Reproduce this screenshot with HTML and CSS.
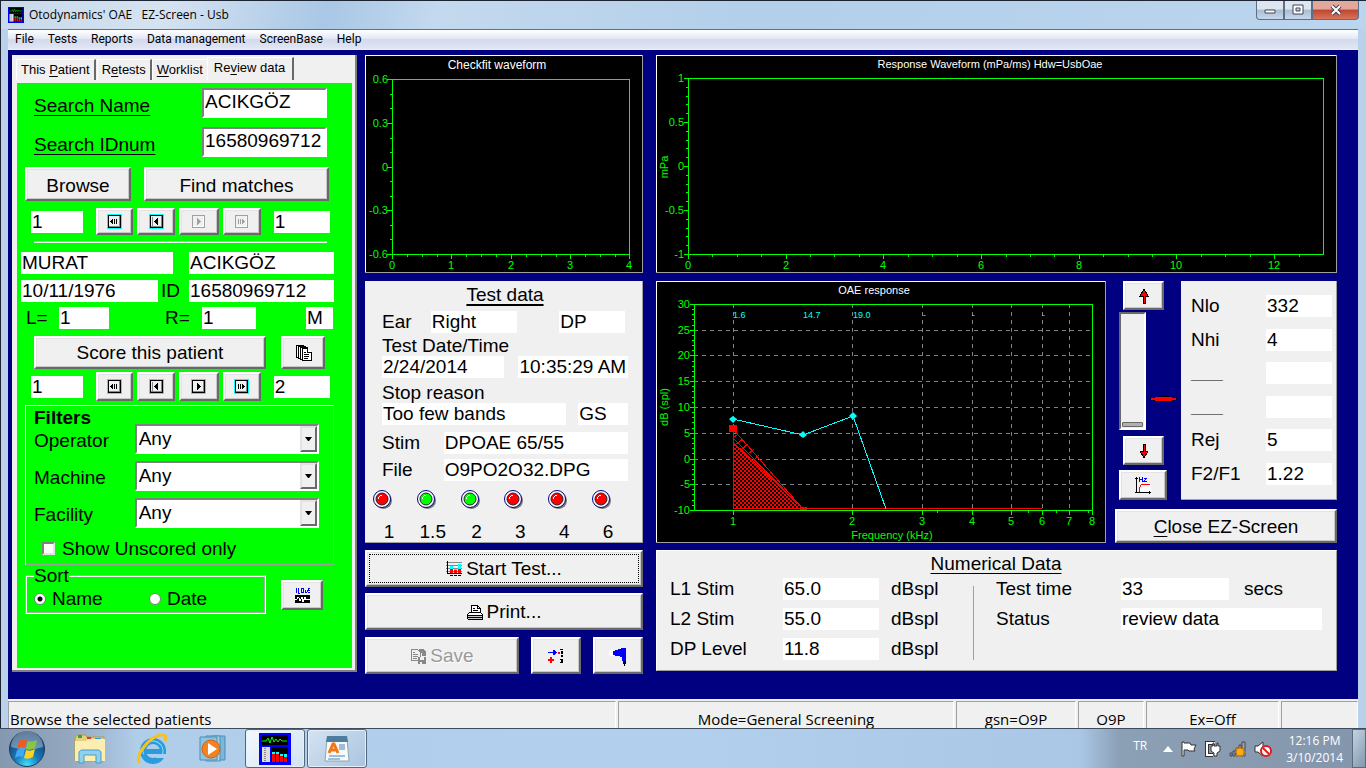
FILE: index.html
```html
<!DOCTYPE html>
<html lang="en">
<head>
<meta charset="utf-8">
<title>Otodynamics' OAE EZ-Screen - Usb</title>
<link rel="stylesheet" href="styles.css">
</head>
<body>
<svg class="defs" aria-hidden="true">
  <defs>
    <symbol id="i-first" viewBox="0 0 15 15"><path class="halo" d="M0 0h15v15H0z"/><path class="ink" d="M1 1h13v13H1z"/><path class="face" d="M2 2h10v10H2z"/><path class="shade" d="M12 2h1v11H2v-1h10z"/><path class="ink" d="M3 7h1V6h1V5h1v5H5V9H4V8H3zM7 5h1v5H7zM9 5h1v5H9z"/></symbol>
    <symbol id="i-prev" viewBox="0 0 15 15"><path class="halo" d="M0 0h15v15H0z"/><path class="ink" d="M1 1h13v13H1z"/><path class="face" d="M2 2h10v10H2z"/><path class="shade" d="M12 2h1v11H2v-1h10z"/><path class="shade" d="M3 3h1v9H3z"/><path class="ink" d="M5 7h1V6h1V5h1V4h1v7H8v-1H7V9H6V8H5z"/></symbol>
    <symbol id="i-next" viewBox="0 0 15 15"><path class="halo" d="M0 0h15v15H0z"/><path class="ink" d="M1 1h13v13H1z"/><path class="face" d="M2 2h10v10H2z"/><path class="shade" d="M12 2h1v11H2v-1h10z"/><path class="ink" d="M6 4h1v1h1v1h1v1h1v1H9v1H8v1H7v1H6z"/></symbol>
    <symbol id="i-last" viewBox="0 0 15 15"><path class="halo" d="M0 0h15v15H0z"/><path class="ink" d="M1 1h13v13H1z"/><path class="face" d="M2 2h10v10H2z"/><path class="shade" d="M12 2h1v11H2v-1h10z"/><path class="ink" d="M4 5h1v5H4zM6 5h1v5H6zM8 5h1v1h1v1h1v1h-1v1H9v1H8z"/></symbol>
    <symbol id="i-led" viewBox="0 0 19 19"><circle cx="10.500" cy="10.500" r="8.500" fill="#777"/><circle cx="9" cy="9" r="8.500" fill="#fff" stroke="#000080"/><circle cx="9" cy="9" r="6" fill="currentColor" stroke="#222"/><path d="M5 9V7h1V6h1V5h2v1H7v1H6v2z" fill="#fff"/></symbol>
    <symbol id="i-app" viewBox="0 0 32 32"><path fill="#00f" d="M0 0h32v32H0z"/><path d="M3 2h26v10H3zM12 14h17v15H12z"/><path fill="none" stroke="#0f0" d="M3 8h4l2-3 2 5 2-6 2 5 2-3 2 3 2-3 2 2h5"/><path fill="#ddd" d="M3 14h8v15H3z"/><path fill="none" stroke="#333" stroke-dasharray="1 1" d="M6 15v13"/><path fill="#f00" d="M13 21h3v8h-3zM17 21h3v8h-3zM21 23h3v6h-3zM25 24h3v5h-3z"/><path fill="#0ff" d="M13 19h3v2h-3zM17 19h3v2h-3zM21 21h3v2h-3zM25 21h3v3h-3z"/></symbol>
  </defs>
</svg>

<div class="window">
  <header class="titlebar">
    <svg class="app-icon" viewBox="0 0 32 32" aria-hidden="true"><use href="#i-app"/></svg>
    <h1 class="title">Otodynamics' OAE &nbsp; EZ-Screen - Usb</h1>
    <div class="window-buttons">
      <button class="wb" aria-label="Minimize"><svg width="14" height="12"><path fill="#fff" stroke="#445" d="M2 6h10v3H2z"/></svg></button>
      <button class="wb" aria-label="Maximize"><svg width="14" height="12"><path fill="#fff" stroke="#445" fill-rule="evenodd" d="M2 1h10v9H2zM5 4h4v3H5z"/></svg></button>
      <button class="wb wb-close" aria-label="Close"><svg width="14" height="12"><path stroke="#445" stroke-width="4" d="M3 2l8 8M11 2l-8 8"/><path stroke="#fff" stroke-width="2" d="M3 2l8 8M11 2l-8 8"/></svg></button>
    </div>
  </header>

  <div class="frame">
    <nav class="menubar" aria-label="Main menu">
      <button>File</button><button>Tests</button><button>Reports</button><button>Data management</button><button>ScreenBase</button><button>Help</button>
    </nav>

    <main class="client">
      <section class="patients">
        <div class="tabs" role="tablist">
          <button class="tab" role="tab">This <u>P</u>atient</button>
          <button class="tab" role="tab">R<u>e</u>tests</button>
          <button class="tab" role="tab"><u>W</u>orklist</button>
          <button class="tab tab-active" role="tab" aria-selected="true">Re<u>v</u>iew data</button>
        </div>
        <div class="review">
          <div class="search">
            <label class="underlined" for="sname">Search Name</label>
            <input class="sunken" id="sname" value="ACIKGÖZ">
            <label class="underlined" for="sid">Search IDnum</label>
            <input class="sunken" id="sid" value="16580969712">
          </div>
          <div class="search-actions">
            <button class="btn">Browse</button>
            <button class="btn">Find matches</button>
          </div>
          <div class="pager">
            <input class="field" aria-label="Current patient" value="1" readonly>
            <div class="pager-buttons">
              <button class="btn" aria-label="First"><svg><use href="#i-first"/></svg></button>
              <button class="btn" aria-label="Previous"><svg><use href="#i-prev"/></svg></button>
              <button class="btn" aria-label="Next" disabled><svg><use href="#i-next"/></svg></button>
              <button class="btn" aria-label="Last" disabled><svg><use href="#i-last"/></svg></button>
            </div>
            <input class="field" aria-label="Patient count" value="1" readonly>
          </div>
          <hr class="rule">
          <div class="names">
            <input class="field" aria-label="First name" value="MURAT" readonly>
            <input class="field" aria-label="Last name" value="ACIKGÖZ" readonly>
          </div>
          <div class="ident">
            <input class="field" aria-label="Date of birth" value="10/11/1976" readonly>
            <label for="pid">ID</label>
            <input class="field" id="pid" value="16580969712" readonly>
          </div>
          <div class="ears">
            <label for="left">L=</label><input class="field" id="left" value="1" readonly>
            <label for="right">R=</label><input class="field" id="right" value="1" readonly>
            <input class="field" aria-label="Sex" value="M" readonly>
          </div>
          <div class="score">
            <button class="btn">Score this patient</button>
            <button class="btn" aria-label="Copy records"><svg width="17" height="17" viewBox="0 0 17 17"><g fill="#fff" stroke="#000"><path d="M1 1h7v12H1z"/><path d="M3 2h7v12H3z"/><path d="M5 3h7v12H5z"/><path d="M7 4h5l4 4v8H7z"/><path d="M12 4v4h4M9 8h2M9 10h5M9 12h5M9 14h4"/></g></svg></button>
          </div>
          <div class="pager pager-tests">
            <input class="field" aria-label="Current test" value="1" readonly>
            <div class="pager-buttons">
              <button class="btn" aria-label="First test"><svg><use href="#i-first"/></svg></button>
              <button class="btn" aria-label="Previous test"><svg><use href="#i-prev"/></svg></button>
              <button class="btn" aria-label="Next test"><svg><use href="#i-next"/></svg></button>
              <button class="btn" aria-label="Last test"><svg><use href="#i-last"/></svg></button>
            </div>
            <input class="field" aria-label="Test count" value="2" readonly>
          </div>
          <section class="filters">
            <h2 class="filters-title">Filters</h2>
            <div class="filter-grid">
              <label for="op">Operator</label>
              <div class="combo"><select id="op"><option>Any</option></select><span class="combo-arrow"><svg width="7" height="4"><path d="M0 0h7L4 4H3z"/></svg></span></div>
              <label for="ma">Machine</label>
              <div class="combo"><select id="ma"><option>Any</option></select><span class="combo-arrow"><svg width="7" height="4"><path d="M0 0h7L4 4H3z"/></svg></span></div>
              <label for="fa">Facility</label>
              <div class="combo"><select id="fa"><option>Any</option></select><span class="combo-arrow"><svg width="7" height="4"><path d="M0 0h7L4 4H3z"/></svg></span></div>
            </div>
            <label class="check"><input type="checkbox">Show Unscored only</label>
          </section>
          <div class="sort-row">
            <fieldset class="sort">
              <legend>Sort</legend>
              <label><input type="radio" name="sort" checked>Name</label>
              <label><input type="radio" name="sort">Date</label>
            </fieldset>
            <button class="btn" aria-label="ILO v5 export"><svg width="15" height="15" viewBox="0 0 15 15"><path stroke="#00f" fill="none" d="M1 0v5M3 0v5h2M6.500 .5h2v4h-2zM10 2v2l1 1 1-1V2M15 .5h-2v2h2v2h-2"/><path d="M0 7h15v8H0z"/><path stroke="#fff" fill="none" d="M0 11h2l1-2 1 1 1 3 2-4 1 5 2-5 1 3 2-1h2"/></svg></button>
          </div>
        </div>
      </section>

      <section class="middle">
        <figure class="chart">
          <svg viewBox="365 55 278 218" role="img" aria-label="Checkfit waveform">
            <text class="c-title c-title-lg" x="497" y="69">Checkfit waveform</text>
            <g class="c-line">
              <path d="M392 79H629V254H392z"/>
              <path d="M387 79h5M387 123h5M387 167h5M387 210h5M387 254h5M390 94h2M390 108h2M390 138h2M390 152h2M390 181h2M390 196h2M390 225h2M390 239h2"/>
              <path d="M392 254v5M451 254v5M511 254v5M570 254v5M629 254v5M407 254v3M422 254v3M437 254v3M466 254v3M481 254v3M496 254v3M526 254v3M541 254v3M556 254v3M585 254v3M600 254v3M615 254v3"/>
            </g>
            <g class="c-y"><text x="388" y="83">0.6</text><text x="388" y="127">0.3</text><text x="388" y="171">0</text><text x="388" y="214">-0.3</text><text x="388" y="258">-0.6</text></g>
            <g class="c-x"><text x="392" y="269">0</text><text x="451" y="269">1</text><text x="511" y="269">2</text><text x="570" y="269">3</text><text x="629" y="269">4</text></g>
          </svg>
        </figure>

        <section class="testdata">
          <h2 class="panel-title">Test data</h2>
          <div class="td-ear"><label for="ear">Ear</label><input class="field" id="ear" value="Right" readonly><input class="field" aria-label="Test type" value="DP" readonly></div>
          <div class="td-label">Test Date/Time</div>
          <div class="td-date"><input class="field" aria-label="Test date" value="2/24/2014" readonly><input class="field" aria-label="Test time of day" value="10:35:29 AM" readonly></div>
          <div class="td-label td-stop">Stop reason</div>
          <div class="td-reason"><input class="field" aria-label="Stop reason" value="Too few bands" readonly><input class="field" aria-label="Mode" value="GS" readonly></div>
          <div class="td-pair"><label for="stim">Stim</label><input class="field" id="stim" value="DPOAE 65/55" readonly></div>
          <div class="td-pair td-file"><label for="file">File</label><input class="field" id="file" value="O9PO2O32.DPG" readonly></div>
          <div class="leds">
            <svg class="led led-red"><use href="#i-led"/></svg><svg class="led led-green"><use href="#i-led"/></svg><svg class="led led-green"><use href="#i-led"/></svg><svg class="led led-red"><use href="#i-led"/></svg><svg class="led led-red"><use href="#i-led"/></svg><svg class="led led-red"><use href="#i-led"/></svg>
          </div>
          <div class="bands"><span>1</span><span>1.5</span><span>2</span><span>3</span><span>4</span><span>6</span></div>
        </section>

        <div class="actions">
          <button class="btn btn-default"><svg width="16" height="16" viewBox="0 0 16 16"><path stroke="#888" d="M0 1h16M0 4h16M0 7h16M0 10h16"/><path d="M1 0h1v12h14v1H1zM4 14h3v1H4zM8 14h3v1H8zM12 14h3v1h-3z"/><path fill="#f00" d="M4 7h3v5H4zM8 9h3v3H8zM12 7h3v5h-3z"/><path fill="#0ff" d="M4 5h3v3H4zM8 8h3v1H8zM12 3h3v5h-3z"/></svg>Start Test...</button>
          <button class="btn"><svg width="16" height="16" viewBox="0 0 16 16"><path fill="#fff" stroke="#000" d="M4 9V1h6l3 3v5"/><path fill="none" stroke="#000" d="M6 4h2M6 6h5M10 1v3h3"/><path d="M2 8h12l2 3v4l-1 1H1l-1-1v-4z"/><path fill="#fff" d="M2 9h12l1 2H1z"/><path fill="#ccc" d="M1 12h14v1H1zM1 14h14v1H1z"/></svg>Print...</button>
          <div class="action-row">
            <button class="btn" disabled><svg width="16" height="16" viewBox="0 0 16 16"><path fill="none" stroke="#888" d="M1 1h6l3 3v8H1zM3 4h2M3 6h5M3 8h5M3 10h4"/><path fill="#888" d="M9 1h5l2 3v4h-4V5l-3-2zM8 9h8v7H8z"/><path fill="#f0f0f0" d="M10 9h4v3h-4zM10 14h2v2h-2z"/></svg>Save</button>
            <button class="btn" aria-label="Step marker"><svg width="16" height="16" viewBox="0 0 16 16"><path fill="#00f" d="M0 4h5V2h1l3 3-3 2H5V5H0z"/><path fill="#f00" d="M2 9h2v2h2v2H4v2H2v-2H0v-2h2zM10 4h2v2h-2z"/><path d="M12 1h3v1h-3zM13 3h2v3h-2zM13 7h2v2h-2zM12 11h3v1h-3zM13 12h2v2h-2zM12 14h3v1h-3z"/></svg></button>
            <button class="btn" aria-label="Probe"><svg width="20" height="20" viewBox="0 0 20 20"><path fill="#fff" d="M2 4h4v6H2L1 8V6z"/><path fill="#00f" d="M5 5l9-3h4v13h-4v-4L5 9z"/><path d="M15 15h3v3h-1v3h-1v-3h-1z"/></svg></button>
          </div>
        </div>
      </section>

      <section class="right">
        <figure class="chart">
          <svg viewBox="656 55 681 218" role="img" aria-label="Response waveform">
            <text class="c-title" x="990" y="68">Response Waveform (mPa/ms) Hdw=UsbOae</text>
            <g class="c-line">
              <path d="M688 78H1323V254H688z"/>
              <path d="M684 78h4M684 122h4M684 166h4M684 210h4M684 254h4M686 87h2M686 96h2M686 104h2M686 113h2M686 131h2M686 140h2M686 148h2M686 157h2M686 175h2M686 184h2M686 192h2M686 201h2M686 219h2M686 228h2M686 236h2M686 245h2"/>
              <path d="M688 254v5M786 254v5M883 254v5M981 254v5M1079 254v5M1176 254v5M1274 254v5M712 254v3M737 254v3M761 254v3M810 254v3M834 254v3M859 254v3M908 254v3M932 254v3M957 254v3M1006 254v3M1030 254v3M1054 254v3M1103 254v3M1128 254v3M1152 254v3M1201 254v3M1225 254v3M1250 254v3M1299 254v3"/>
            </g>
            <g class="c-y"><text x="684" y="82">1</text><text x="684" y="126">0.5</text><text x="684" y="170">0</text><text x="684" y="214">-0.5</text><text x="684" y="258">-1</text></g>
            <g class="c-x"><text x="688" y="269">0</text><text x="786" y="269">2</text><text x="883" y="269">4</text><text x="981" y="269">6</text><text x="1079" y="269">8</text><text x="1176" y="269">10</text><text x="1274" y="269">12</text><text transform="translate(668 167) rotate(-90)">mPa</text></g>
          </svg>
        </figure>

        <div class="response">
          <figure class="chart">
            <svg viewBox="656 281 450 262" role="img" aria-label="OAE response">
              <defs><pattern id="hatch" width="4" height="4" patternUnits="userSpaceOnUse"><path fill="#f00" d="M0 0h4v4H0z"/><path d="M0 0h2v2H0zM2 2h2v2H2z"/></pattern></defs>
              <text class="c-title" x="874" y="294">OAE response</text>
              <path class="c-grid" d="M694 330H1092M694 355H1092M694 381H1092M694 407H1092M694 433H1092M694 459H1092M694 484H1092M733 304V510M852 304V510M922 304V510M972 304V510M1011 304V510M1042 304V510M1069 304V510"/>
              <g class="c-line">
                <path d="M694 304H1092V510H694z"/>
                <path d="M690 304h4M690 330h4M690 355h4M690 381h4M690 407h4M690 433h4M690 459h4M690 484h4M690 510h4"/>
                <path d="M692 309h2M692 314h2M692 319h2M692 325h2M692 335h2M692 340h2M692 345h2M692 350h2M692 361h2M692 366h2M692 371h2M692 376h2M692 386h2M692 391h2M692 397h2M692 402h2M692 412h2M692 417h2M692 422h2M692 428h2M692 438h2M692 443h2M692 448h2M692 453h2M692 464h2M692 469h2M692 474h2M692 479h2M692 489h2M692 494h2M692 500h2M692 505h2"/>
                <path d="M733 510v5M852 510v5M922 510v5M972 510v5M1011 510v5M1042 510v5M1069 510v5M1092 510v5M937 510v3M1028 510v3M1056 510v3M1088 510v3"/>
              </g>
              <path fill="url(#hatch)" d="M733 442L803 509H733z"/>
              <path class="c-noise" d="M733 429V509M733 429L803 509M733 438L803 509M733 442L803 509M733 438l5-4M736 444l7-5M742 449l6-5M748 454l6-5M754 460l5-5"/>
              <path fill="#f00" d="M729 425h8v7h-8zM800 507h7v3h-7zM733 508h309v1H733z"/>
              <path class="c-signal" d="M733 419L803 435L853 416L886 509"/>
              <path fill="#0ff" d="M733 416l4 3-4 4-4-4zM803 431l4 4-4 3-4-3zM853 412l4 4-4 4-4-4z"/>
              <g class="c-values"><text x="733" y="318">1.6</text><text x="803" y="318">14.7</text><text x="853" y="318">19.0</text><text x="923" y="318">-</text><text x="972" y="318">-</text><text x="1042" y="318">-</text></g>
              <g class="c-y"><text x="690" y="308">30</text><text x="690" y="334">25</text><text x="690" y="359">20</text><text x="690" y="385">15</text><text x="690" y="411">10</text><text x="690" y="437">5</text><text x="690" y="463">0</text><text x="690" y="488">-5</text><text x="690" y="514">-10</text></g>
              <g class="c-x"><text x="733" y="525">1</text><text x="852" y="525">2</text><text x="922" y="525">3</text><text x="972" y="525">4</text><text x="1011" y="525">5</text><text x="1042" y="525">6</text><text x="1069" y="525">7</text><text x="1092" y="525">8</text><text x="892" y="539">Frequency (kHz)</text><text transform="translate(668 407) rotate(-90)">dB (spl)</text></g>
            </svg>
          </figure>
          <div class="side">
            <div class="side-top">
              <div class="scale">
                <button class="btn scale-step" aria-label="Scale up"><svg width="10" height="16" viewBox="0 0 10 16"><path stroke="#000" fill="#f00" d="M5 1l4 7H6v7H4V8H1z"/></svg></button>
                <div class="scale-slide">
                  <div class="slot"><div class="thumb"></div></div>
                  <svg class="lamp" viewBox="0 0 27 8"><path d="M0 3h4V2h5V1h10v1h5v1h3v2h-3v1h-5v1H9V6H4V5H0z"/><path fill="#f00" d="M1 3h4V2h17v1h4v2h-4v1H5V5H1z"/></svg>
                </div>
                <button class="btn scale-step" aria-label="Scale down"><svg width="10" height="16" viewBox="0 0 10 16"><path stroke="#000" fill="#f00" d="M5 15L1 8h3V1h2v7h3z"/></svg></button>
                <button class="btn scale-hz" aria-label="Frequency axis"><svg width="17" height="18" viewBox="0 0 17 18"><path fill="#fff" d="M6 8h10v8H4z"/><path d="M1 1h1v15h14v1H0v-1h1zM0 2h3v1H0zM14 15h1v3h-1z"/><path fill="none" stroke="#f00" d="M4 16v-3l2-4 3-1h6"/><path fill="none" stroke="#00f" d="M4 1v5M7 1v5M4 3h3M9 2h3l-3 3h3"/></svg></button>
              </div>
              <div class="params">
                <label for="nlo">Nlo</label><input class="field" id="nlo" value="332" readonly>
                <label for="nhi">Nhi</label><input class="field" id="nhi" value="4" readonly>
                <label class="blank" for="p3">___</label><input class="field" id="p3" value="" readonly>
                <label class="blank" for="p4">___</label><input class="field" id="p4" value="" readonly>
                <label for="rej">Rej</label><input class="field" id="rej" value="5" readonly>
                <label for="f21">F2/F1</label><input class="field" id="f21" value="1.22" readonly>
              </div>
            </div>
            <button class="btn close-app"><span><u>C</u>lose EZ-Screen</span></button>
          </div>
        </div>

        <section class="numerical">
          <h2 class="panel-title">Numerical Data</h2>
          <div class="num-cols">
            <div class="num-left">
              <label for="l1">L1 Stim</label><input class="field" id="l1" value="65.0" readonly><span>dBspl</span>
              <label for="l2">L2 Stim</label><input class="field" id="l2" value="55.0" readonly><span>dBspl</span>
              <label for="dpl">DP Level</label><input class="field" id="dpl" value="11.8" readonly><span>dBspl</span>
            </div>
            <div class="num-right">
              <label for="tt">Test time</label><input class="field" id="tt" value="33" readonly><span>secs</span>
              <label for="st">Status</label><input class="field num-status" id="st" value="review data" readonly>
            </div>
          </div>
        </section>
      </section>
    </main>

    <footer class="statusbar">
      <div class="cell cell-left">Browse the selected patients</div>
      <div class="cell">Mode=General Screening</div>
      <div class="cell">gsn=O9P</div>
      <div class="cell">O9P</div>
      <div class="cell">Ex=Off</div>
      <div class="cell"></div>
    </footer>
  </div>
</div>

<footer class="taskbar">
  <button class="start" aria-label="Start"><svg width="38" height="38" viewBox="0 0 38 38">
    <defs><radialGradient id="orb" cx=".5" cy=".95" r=".9"><stop offset="0" stop-color="#3fe0ff"/><stop offset=".4" stop-color="#1a78b8"/><stop offset="1" stop-color="#123a66"/></radialGradient></defs>
    <circle cx="19" cy="19" r="17.500" fill="url(#orb)" stroke="#1c3c5c"/><path fill="#fff" opacity=".35" d="M3 17a16 16 0 0 1 32 0q-16 5-32 0z"/>
    <path fill="#ee5a24" d="M11 11q4-3 8-1l-2 8q-4-2-8 1z"/><path fill="#8cc63f" d="M20 11q4 2 9-1l-2 8q-5 3-9 1z"/><path fill="#3fa9f5" d="M9 20q4-3 8-1l-2 8q-4-2-8 1z"/><path fill="#ffd21f" d="M18 20q4 2 9-1l-2 8q-5 3-9 1z"/></svg></button>
  <button class="task" aria-label="Explorer"><svg width="32" height="32" viewBox="0 0 32 32"><path fill="#e6cf7c" stroke="#b89a3c" d="M1 5l2-3h8l2 2h17v24H1z"/><path fill="#35a335" d="M4 2h4v3H4z"/><path fill="#d33" d="M13 4h4v2h-4z"/><path fill="#39c" d="M21 5h6v2h-6z"/><path fill="#fbeeb0" d="M1 8h11l2-2h17v22H1z"/><path fill="#8fd0ee" stroke="#4a9cc8" d="M5 30V19q1-2 3-2h16q2 0 3 2v11h-5v-8H10v8z"/></svg></button>
  <button class="task" aria-label="Internet Explorer"><svg width="32" height="32" viewBox="0 0 32 32"><circle cx="17" cy="18" r="10" fill="none" stroke="#2a9bdc" stroke-width="6"/><path fill="#b0cdea" d="M18 20h12v5H20z"/><path fill="#2a9bdc" d="M10 16h20v5H10z"/><circle cx="17" cy="18" r="10" fill="none" stroke="#8fdcff" stroke-width="1" stroke-dasharray="40 30" transform="rotate(160 17 18)"/><path fill="none" stroke="#f6c21c" stroke-width="3" d="M4 30C-3 25 12 5 24 2q8-1 5 6"/></svg></button>
  <button class="task" aria-label="Media Player"><svg width="32" height="32" viewBox="0 0 32 32"><path fill="#7db6d8" stroke="#4a8fb8" d="M14 3h13v24H14z"/><path fill="#a6d3ea" stroke="#4a8fb8" d="M8 3h14v25H8z"/><path fill="#8cc4e2" stroke="#4a8fb8" d="M2 4h17v23H2z"/><circle cx="13" cy="16" r="9" fill="#f58220" stroke="#d95f0a"/><path fill="#fff" d="M10 10l9 6-9 6z"/></svg></button>
  <button class="task task-open task-active" aria-label="EZ-Screen"><svg width="32" height="32"><use href="#i-app"/></svg></button>
  <button class="task task-open" aria-label="WordPad"><svg width="32" height="32" viewBox="0 0 32 32"><path fill="#f7fafc" stroke="#8aa" d="M6 6h20l2 22H4z"/><path fill="#4f7da0" d="M6 3h20l1 6H5z"/><path fill="none" stroke="#f07818" stroke-width="3" d="M8 20l4-9h1l4 9M10 17h5"/><path stroke="#4a7fb5" d="M18 12h6M18 14h6M18 16h6M8 23h16M7 26h12"/></svg></button>
  <div class="tray">
    <span class="lang">TR</span>
    <svg width="10" height="6"><path fill="#fff" d="M5 0l5 6H0z"/></svg>
    <svg width="16" height="16"><path fill="#fff" stroke="#333" d="M1 1h2v1h6l1 2h5l-2 4 1 2H8L7 9H3v6H1z"/></svg>
    <svg width="16" height="16"><path fill="none" stroke="#333" stroke-width="4" d="M10 2H2v12h6"/><path fill="none" stroke="#fff" stroke-width="2" d="M10 2H2v12h6"/><path fill="#fff" stroke="#333" d="M6 5h2V2h1v3h3V2h1v3h2v5l-3 2v3H9v-3L6 10z"/></svg>
    <svg width="17" height="16"><path fill="#9ab" stroke="#445" d="M1 12h2v3H1zM4 10h2v5H4zM7 7h2v8H7zM10 4h2v11h-2zM13 1h3v14h-3z"/><path fill="#ffb01c" stroke="#c77a00" d="M11 5l1 3 3-1-1 3 3 1-3 1 1 3-3-1-1 2-1-2-3 1 1-3-2-1 2-1-1-3 3 1z"/></svg>
    <svg width="18" height="16"><path fill="#fff" stroke="#333" d="M1 5h3l5-4v14l-5-4H1z"/><circle cx="12" cy="10" r="5" fill="#fff" stroke="#e21b1b" stroke-width="2"/><path stroke="#e21b1b" stroke-width="2" d="M9 7l6 6"/></svg>
    <time class="clock">12:16 PM<br>3/10/2014</time>
  </div>
  <button class="show-desktop" aria-label="Show desktop"></button>
</footer>
</body>
</html>
```
FILE: styles.css
```css
* { box-sizing: border-box; }
body {
  margin: 0;
  min-height: 100vh;
  display: flex;
  flex-direction: column;
  font: 19px/22px "Liberation Sans", Arial, sans-serif;
  color: #000;
  background: #b5cfe9;
}
button, input, select { font: inherit; color: inherit; margin: 0; }
input, select { min-width: 0; border-radius: 0; }
svg { display: block; flex: none; }
h1, h2, figure, fieldset { margin: 0; padding: 0; font-size: inherit; font-weight: normal; }
.defs { position: absolute; width: 0; height: 0; }

/* Window chrome */
.window { flex: 1; display: flex; flex-direction: column; border-left: 1px solid #1b2430; background: #b9d1ea; }
.titlebar {
  height: 29px;
  display: flex;
  align-items: center;
  padding-left: 7px;
  border-top: 1px solid #1b2430;
  background: linear-gradient(100deg, #c8d9ea 0%, #d5e3f1 12%, #a9c7e6 24%, #c3d9ee 32%, #b3cfea 55%, #bcd5ee 100%);
}
.app-icon { width: 16px; height: 16px; }
.title { margin-left: 5px; font: 12px/16px "Open Sans", "Noto Sans", sans-serif; white-space: pre; }
.window-buttons { margin-left: auto; margin-right: 7px; align-self: flex-start; display: flex; }
.wb {
  display: flex; align-items: center; justify-content: center;
  width: 28px; height: 19px; padding: 0;
  border: 1px solid #5b6f85; border-top: 0;
  background: linear-gradient(#dbe6f1 45%, #a9bdd2 50%, #c6d8ea);
}
.wb:first-child { border-radius: 0 0 0 4px; }
.wb-close { width: 47px; border-radius: 0 0 4px 0; background: linear-gradient(#e3a79b 45%, #c0452f 50%, #d8745c); }
.frame { flex: 1; display: flex; flex-direction: column; margin: 0 8px 0 7px; }
.menubar { height: 21px; display: flex; gap: 14px; padding-left: 7px; border-top: 1px solid #5f7285; border-bottom: 1px solid #f0f0f0; background: linear-gradient(#fff, #e3e8f4 45%, #d3daed 50%, #e1e6f4); }
.menubar button { padding: 0; border: 0; background: none; font: 12px/19px Roboto, "Open Sans", sans-serif; }

/* Shared controls */
.btn {
  display: flex; align-items: center; justify-content: center; gap: 4px;
  padding: 0; background: #f0f0f0; white-space: nowrap;
  border: 2px solid; border-color: #fff #696969 #696969 #fff;
  box-shadow: inset -1px -1px #c8c8c8, inset 1px 1px #e3e3e3;
}
.btn:disabled { color: #9a9a9a; text-shadow: 1px 1px #fff; }
.field { display: block; width: 100%; height: 22px; padding: 0 1px; border: 0; background: #fff; outline: 0; }
.sunken { width: 100%; height: 30px; padding: 0 1px 2px; background: #fff; border: 2px solid; border-color: #808080 #fff #fff #808080; outline: 0; }
.underlined, .panel-title { text-decoration: underline; text-decoration-thickness: 1px; text-underline-offset: 3px; }
.panel-title { text-align: center; text-decoration-thickness: 2px; }

.client {
  flex: 1;
  display: grid;
  grid-template-columns: 345fr 278fr 686fr;
  gap: 8px;
  align-items: start;
  padding: 5px 21px 24px 4px;
  background: #000080;
}

/* Patient panel */
.patients { min-width: 0; padding: 2px 3px 2px 5px; background: #f0f0f0; border-right: 2px solid #808080; border-bottom: 2px solid #808080; }
.tabs { height: 26px; display: flex; align-items: flex-start; margin-left: -1px; font-size: 13px; line-height: 20px; }
.tab { height: 21px; margin-top: 2px; padding: 0 4px; border: 0; border-left: 1px solid #fff; border-top: 1px solid #fff; border-right: 2px solid #696969; background: #f0f0f0; white-space: nowrap; }
.tab:nth-child(2) { margin-left: 1px; }
.tab:nth-child(3) { border-right: 0; }
.tab-active { height: 23px; margin-top: 0; padding: 0 7px 2px 6px; }
.tab u { text-underline-offset: 2px; }
.review { min-height: 585px; padding: 5px 18px 0 8px; background: #0f0; }
.search { display: grid; grid-template-columns: 168fr 125fr; row-gap: 9px; align-items: center; padding: 0 7px 0 9px; }
.search label { padding-top: 6px; }
.search-actions { display: grid; grid-template-columns: 106fr 185fr; gap: 13px; margin: 10px 5px 0 0; }
.search-actions .btn { height: 34px; padding-top: 3px; }
.pager { display: grid; grid-template-columns: 52fr 164fr 56fr; column-gap: 13px; align-items: center; margin: 7px 4px 0 6px; }
.pager-buttons { display: grid; grid-template-columns: 37fr 38fr 40fr 38fr; gap: 4px; }
.pager-buttons .btn { height: 27px; }
.pager svg { width: 15px; height: 15px; shape-rendering: crispEdges; }
.halo { fill: var(--halo, #0ff); }
.ink { fill: var(--ink, #000); }
.face { fill: #f0f0f0; }
.shade { fill: var(--shade, #888); }
.btn:disabled svg { --halo: #f0f0f0; --ink: #a0a0a0; --shade: #fff; }
.rule { height: 2px; margin: 6px 7px 0 9px; border: 0; background: #fff; border-top: 1px solid #a0d0a0; }
.names { display: grid; grid-template-columns: 152fr 145fr; gap: 16px; margin: 9px 0 0 -4px; }
.ident { display: grid; grid-template-columns: 137fr 31fr 145fr; margin: 6px 0 0 -4px; }
.ident label { padding-left: 3px; }
.ears { display: grid; grid-template-columns: 33fr 50fr 56fr 37fr 54fr 50fr 27fr; margin: 5px 1px 0 1px; }
.ears label:nth-of-type(2) { grid-column: 4; }
.ears #right { grid-column: 5; }
.ears .field:last-child { grid-column: 7; }
.score { display: grid; grid-template-columns: 232fr 44fr; gap: 15px; margin: 7px 9px 0 9px; }
.score .btn { height: 33px; }
.pager-tests { margin-top: 3px; }
.pager-tests .btn { height: 29px; }
.filters { margin-top: 4px; padding: 0 14px 4px 8px; border: 1px solid; border-color: #fff #a0a0a0 #a0a0a0 #fff; }
.filters-title { height: 18px; font-weight: bold; line-height: 24px; }
.filter-grid { display: grid; grid-template-columns: 101fr 185fr; row-gap: 7px; align-items: center; }
.filter-grid label { padding-top: 3px; }
.combo { position: relative; height: 30px; }
.combo select { width: 100%; height: 100%; padding: 0 22px 0 2px; appearance: none; background: #fff; border: 2px solid; border-color: #808080 #fff #fff #808080; }
.combo-arrow { position: absolute; top: 2px; right: 2px; bottom: 2px; width: 17px; display: flex; align-items: center; justify-content: center; background: #f0f0f0; border: 2px solid; border-color: #e3e3e3 #696969 #696969 #e3e3e3; pointer-events: none; }
.check { display: flex; align-items: center; gap: 7px; padding: 9px 0 0 8px; line-height: 23px; }
.check input { width: 13px; height: 13px; appearance: none; background: #fff; border: 2px solid; border-color: #808080 #e3e3e3 #e3e3e3 #808080; }
.sort-row { display: grid; grid-template-columns: 241fr 42fr; gap: 15px; align-items: end; margin: 1px 11px 0 0; }
.sort { min-width: 0; height: 48px; display: grid; grid-template-columns: 115fr 115fr; padding: 0 0 0 7px; border: 2px groove #fff; }
.sort legend { padding: 0; line-height: 20px; }
.sort label { display: flex; align-items: center; gap: 6px; line-height: 20px; }
.sort input { width: 12px; height: 12px; appearance: none; border-radius: 50%; background: #fff; border: 1px solid #808080; }
.sort input:checked { background: radial-gradient(#000 2px, #fff 3px); }
.sort-row .btn { height: 30px; margin-bottom: 4px; }

/* Charts */
.chart { background: #000; box-shadow: inset -1px -1px #a0a0a0, inset 1px 1px #fff; }
.chart svg { width: 100%; height: auto; font-size: 11px; }
.c-title { fill: #fff; text-anchor: middle; }
.c-title-lg { font-size: 12px; }
.c-line { fill: none; stroke: #0f0; shape-rendering: crispEdges; }
.c-y, .c-x { fill: #0f0; text-anchor: end; }
.c-x { text-anchor: middle; }
.c-grid { stroke: #808080; stroke-dasharray: 4 4; shape-rendering: crispEdges; }
.c-noise { fill: none; stroke: #f00; shape-rendering: crispEdges; }
.c-signal { fill: none; stroke: #0ff; shape-rendering: crispEdges; }
.c-values { fill: #0ff; font-size: 9px; }

/* Test data */
.middle, .right { min-width: 0; display: flex; flex-direction: column; gap: 8px; }
.right { padding-left: 5px; }
.testdata { height: 262px; padding: 3px 14px 0 17px; background: #f0f0f0; border-right: 1px solid #a0a0a0; border-bottom: 1px solid #a0a0a0; }
.td-ear { display: grid; grid-template-columns: 49fr 87fr 42fr 66fr; margin: 5px 3px 0 0; }
.td-ear .field:last-child { grid-column: 4; }
.td-label { margin-top: 3px; line-height: 20px; }
.td-date { display: grid; grid-template-columns: 123fr 110fr; gap: 14px; }
.td-stop { margin-top: 5px; }
.td-reason { display: grid; grid-template-columns: 185fr 50fr; gap: 12px; }
.td-pair { display: grid; grid-template-columns: 62fr 185fr; margin-top: 7px; }
.td-file { margin-top: 5px; }
.leds { display: flex; justify-content: space-between; margin: 9px 17px 0 -9px; }
.led { width: 19px; height: 19px; }
.led-red { color: #f00; }
.led-green { color: #0f0; }
.bands { display: grid; grid-template-columns: repeat(6, 1fr); margin: 12px -2px 0 -15px; text-align: center; }

.actions { display: flex; flex-direction: column; gap: 6px; margin-top: -1px; }
.actions .btn { width: 100%; height: 37px; }
.actions svg, .score svg, .sort-row svg, .scale svg { shape-rendering: crispEdges; }
.btn-default { outline: 1px dotted #000; outline-offset: -5px; }
.action-row { display: grid; grid-template-columns: 154fr 50fr 50fr; gap: 12px; margin-top: 1px; }

/* Response row */
.response { display: grid; grid-template-columns: 450fr 222fr; gap: 9px; }
.side { min-width: 0; display: flex; flex-direction: column; justify-content: space-between; }
.side-top { display: grid; grid-template-columns: 60fr 156fr; gap: 6px; }
.scale { display: flex; flex-direction: column; padding-left: 4px; }
.scale-step { width: 41px; height: 29px; margin-left: 4px; }
.scale-slide { display: flex; align-items: flex-end; gap: 4px; margin: 2px -2px 6px 0; }
.slot { width: 27px; height: 118px; display: flex; align-items: flex-end; background: #f0f0f0; border: 2px solid; border-color: #696969 #fff #fff #696969; padding: 1px; }
.thumb { width: 100%; height: 5px; border: 1px solid #696969; background: #b0b0b0; border-radius: 1px; }
.lamp { width: 27px; height: 8px; margin-bottom: 27px; }
.scale-hz { width: 48px; height: 30px; margin-top: 5px; }
.params { display: grid; grid-template-columns: 75fr 66fr; align-content: space-between; padding: 14px 4px 14px 10px; background: #f0f0f0; border-right: 1px solid #a0a0a0; border-bottom: 1px solid #a0a0a0; }
.blank { font-weight: bold; }
.close-app { height: 34px; padding-top: 2px; }
.close-app u { text-underline-offset: 3px; }

/* Numerical data */
.numerical { height: 121px; margin-top: -1px; padding: 2px 14px 0 13px; background: #f0f0f0; border: 1px solid; border-color: #fff #a0a0a0 #a0a0a0 #fff; }
.numerical .panel-title { text-decoration-thickness: 1px; }
.num-cols { display: grid; grid-template-columns: 303fr 349fr; margin-top: 3px; }
.num-left { display: grid; grid-template-columns: 113fr 96fr 94fr; row-gap: 8px; }
.num-left span { padding-left: 12px; }
.num-right { display: grid; grid-template-columns: 125fr 108fr 93fr; row-gap: 8px; align-content: start; padding-left: 23px; background: linear-gradient(#a0a0a0, #a0a0a0) 0 8px / 1px 76px no-repeat; }
.num-right span { padding-left: 15px; }
.num-status { grid-column: 2 / 4; }

/* Status bar */
.statusbar { display: grid; grid-template-columns: 608fr 336fr 120fr 66fr 133fr 77fr; gap: 2px; height: 29px; padding-top: 2px; overflow: hidden; background: #f0f0f0; font: 15px/20px "Open Sans", "Noto Sans", sans-serif; }
.cell { padding-top: 7px; text-align: center; border-top: 1px solid #a0a0a0; border-left: 1px solid #a0a0a0; border-right: 1px solid #fff; white-space: nowrap; }
.cell-left { padding-left: 1px; text-align: left; }

/* Taskbar */
.taskbar {
  height: 40px; display: flex; align-items: stretch;
  border-top: 1px solid #3c4c5e;
  background: linear-gradient(90deg, #8499b0 0, #93a8bf 5%, #b0cdea 10%, #b2d0ee 50%, #aac8e6 79%, #8b9fb5 82%, #8496ac 100%);
}
.taskbar button { padding: 0; border: 0; background: none; display: flex; align-items: center; justify-content: center; }
.taskbar .start { width: 54px; margin-right: 5px; }
.taskbar .task { width: 62px; }
.taskbar .task-open { width: 60px; margin-right: 2px; border: 1px solid #52677d; border-radius: 3px; background: linear-gradient(135deg, #d4e3f2, #a9c4df); box-shadow: inset 0 0 0 1px #e6f0fa; }
.taskbar .task-active { background: linear-gradient(135deg, #f4f8fc, #d2e2f2); }
.tray { margin-left: auto; display: flex; align-items: center; gap: 8px; color: #fff; font: 12px/17px "Open Sans", "Noto Sans", sans-serif; }
.tray .lang { margin-right: 8px; padding-bottom: 6px; }
.clock { margin: 0 9px 0 6px; text-align: center; }
.taskbar .show-desktop { width: 14px; border: 1px solid #5b6b7c; background: linear-gradient(120deg, #c3d3e2, #8298ae); }
```
